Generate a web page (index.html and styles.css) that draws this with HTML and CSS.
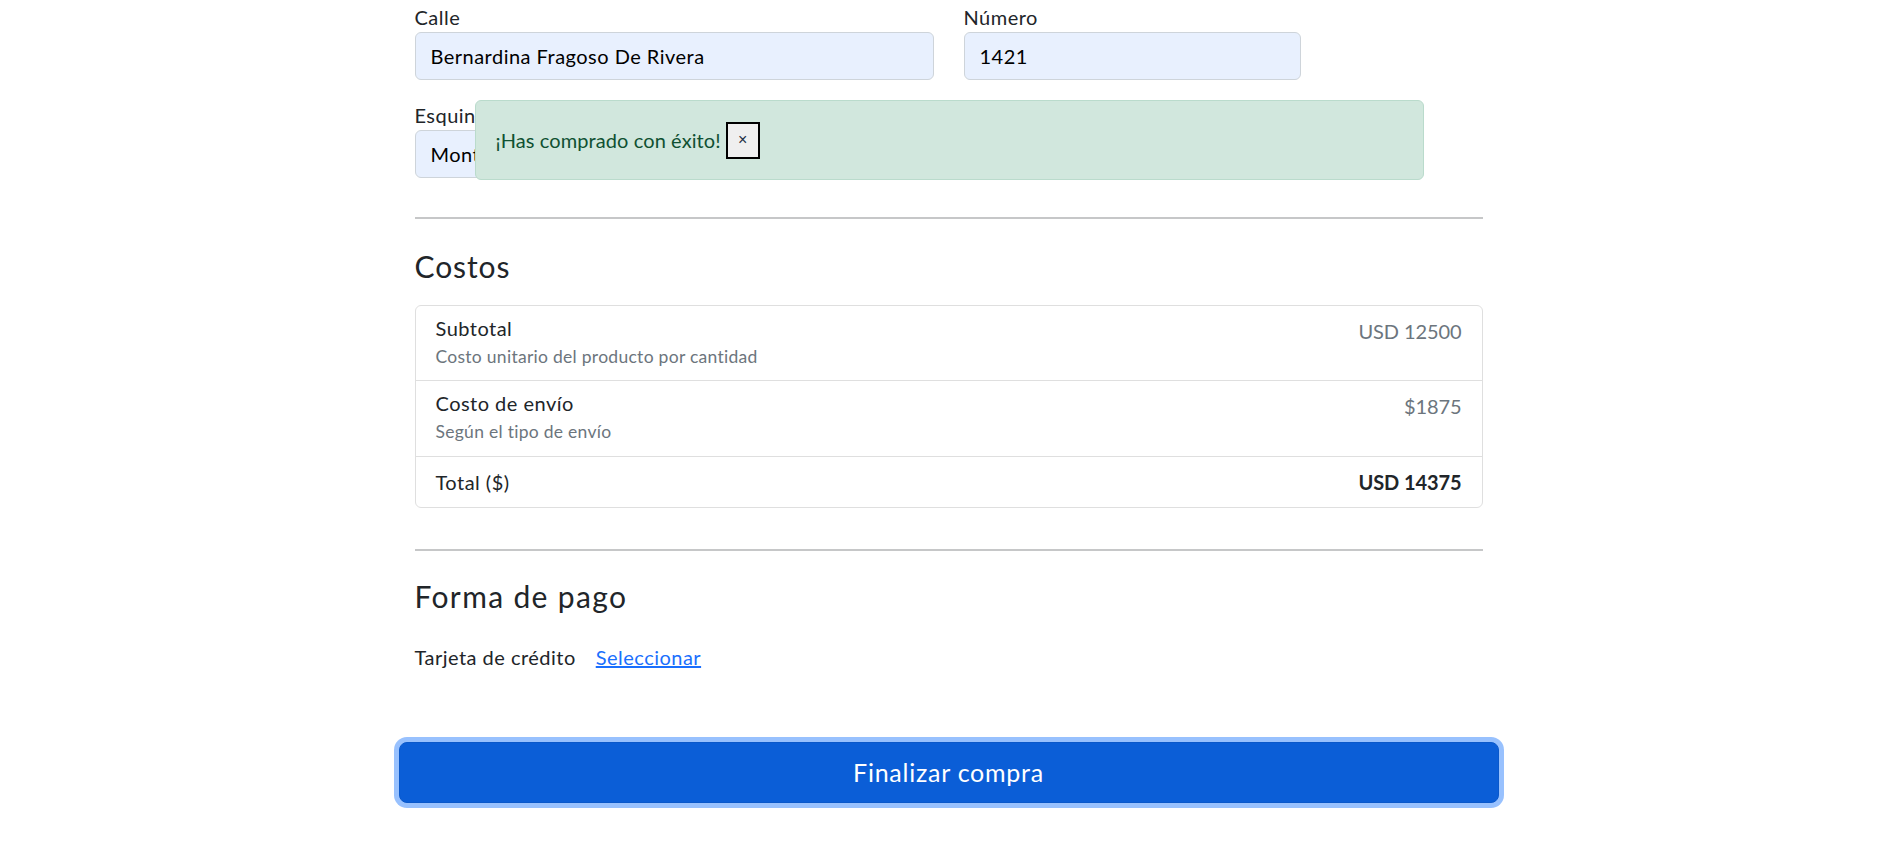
FILE: index.html
```html
<!DOCTYPE html>
<html lang="es">
<head>
<meta charset="utf-8">
<title>Finalizar compra</title>
<link rel="stylesheet" href="styles.css">
</head>
<body>
<div class="page">
  <div class="content">
    <div class="address-grid">
      <div class="field">
        <label class="field-label" for="calle">Calle</label>
        <input class="field-input" id="calle" type="text" value="Bernardina Fragoso De Rivera">
      </div>
      <div class="field">
        <label class="field-label" for="numero">Número</label>
        <input class="field-input" id="numero" type="text" value="1421">
      </div>
      <div class="field">
        <label class="field-label" for="esquina">Esquina</label>
        <input class="field-input" id="esquina" type="text" value="Montevideo">
      </div>
    </div>

    <hr class="divider divider-first">

    <h4 class="section-title">Costos</h4>
    <ul class="cost-list">
      <li class="cost-item">
        <div>
          <h6 class="cost-name">Subtotal</h6>
          <small class="cost-desc">Costo unitario del producto por cantidad</small>
        </div>
        <span class="cost-value">USD 12500</span>
      </li>
      <li class="cost-item">
        <div>
          <h6 class="cost-name">Costo de envío</h6>
          <small class="cost-desc">Según el tipo de envío</small>
        </div>
        <span class="cost-value">$1875</span>
      </li>
      <li class="cost-item">
        <span>Total ($)</span>
        <strong class="cost-total">USD 14375</strong>
      </li>
    </ul>

    <hr class="divider divider-second">

    <h4 class="section-title section-title-pay">Forma de pago</h4>
    <div class="payment">
      <span>Tarjeta de crédito</span>
      <a class="payment-link" href="#">Seleccionar</a>
    </div>
  </div>

  <button class="finish-btn" type="button">Finalizar compra</button>

  <div class="alert" role="alert">
    <span class="alert-text">¡Has comprado con éxito!</span>
    <button class="alert-close" type="button">×</button>
  </div>
</div>
</body>
</html>
```

FILE: styles.css
```css
* {
  box-sizing: border-box;
}

html, body {
  margin: 0;
  padding: 0;
  background: #ffffff;
}

body {
  font-family: "Lato", "Open Sans", sans-serif;
  font-size: 20px;
  line-height: 1.5;
  letter-spacing: 0.024em;
  color: #212529;
}

.page {
  position: relative;
  width: 1100px;
  margin-left: calc(50% - 548px);
  padding-top: 2px;
  padding-bottom: 40px;
}

.content {
  padding: 0 16px;
}

.address-grid {
  display: grid;
  grid-template-columns: 519px 337px;
  column-gap: 30px;
  row-gap: 20px;
}

.field {
  display: flex;
  flex-direction: column;
}

.field-label {
  display: block;
  line-height: 30px;
  height: 30px;
}

.field-input {
  height: 48px;
  padding: 7px 15px;
  font-family: "Lato", "Open Sans", sans-serif;
  font-size: 20px;
  letter-spacing: 0.024em;
  color: #000000;
  background: #e8f0fe;
  border: 1px solid #ced4da;
  border-radius: 6px;
  outline: none;
}

.divider {
  border: 0;
  border-top: 2px solid #c6c7c8;
  height: 0;
  margin: 0;
}

.divider-first {
  margin-top: 39px;
}

.divider-second {
  margin-top: 41px;
}

.section-title {
  margin: 29px 0 21px;
  font-size: 30px;
  font-weight: 400;
  line-height: 36px;
  letter-spacing: 0.03em;
}

.section-title-pay {
  margin: 27px 0 28px;
  letter-spacing: 0.045em;
}

.cost-list {
  list-style: none;
  margin: 0;
  padding: 0;
  border: 1px solid #dfdfdf;
  border-radius: 6px;
}

.cost-item {
  display: flex;
  justify-content: space-between;
  padding: 10px 20px;
  border-top: 1px solid #dfdfdf;
}

.cost-item:first-child {
  border-top: 0;
}

.cost-name {
  margin: 0;
  font-size: 20px;
  font-weight: 400;
  line-height: 1.2;
}

.cost-desc {
  font-size: 17.5px;
  letter-spacing: 0.016em;
  color: #6c757d;
}

.cost-value {
  color: #6c757d;
  letter-spacing: -0.005em;
}

.cost-total {
  font-weight: 700;
  letter-spacing: -0.005em;
}

.payment {
  display: flex;
  align-items: baseline;
  gap: 20px;
  line-height: 30px;
}

.payment-link {
  color: #1a6ffd;
  text-decoration: underline;
}

.finish-btn {
  display: block;
  width: 100%;
  height: 61px;
  margin-top: 70px;
  font-family: "Lato", "Open Sans", sans-serif;
  font-size: 25px;
  letter-spacing: 0.03em;
  color: #ffffff;
  background: #0b5ed7;
  border: 1px solid #0a58ca;
  border-radius: 8px;
  box-shadow: 0 0 0 5px #98c1fe;
}

.alert {
  position: absolute;
  top: 100px;
  left: 76px;
  width: 949px;
  height: 80px;
  display: flex;
  align-items: center;
  gap: 5px;
  padding: 0 20px;
  color: #0f5132;
  background: #d1e7dd;
  border: 1px solid #badbcc;
  border-radius: 6px;
}

.alert-text {
  letter-spacing: 0.005em;
}

.alert-close {
  width: 34px;
  height: 37px;
  padding: 0;
  font-family: "Liberation Sans", sans-serif;
  font-size: 16px;
  letter-spacing: 0;
  color: #1f2f46;
  background: #efefef;
  border: 2px solid #000000;
  border-radius: 0;
}
```
